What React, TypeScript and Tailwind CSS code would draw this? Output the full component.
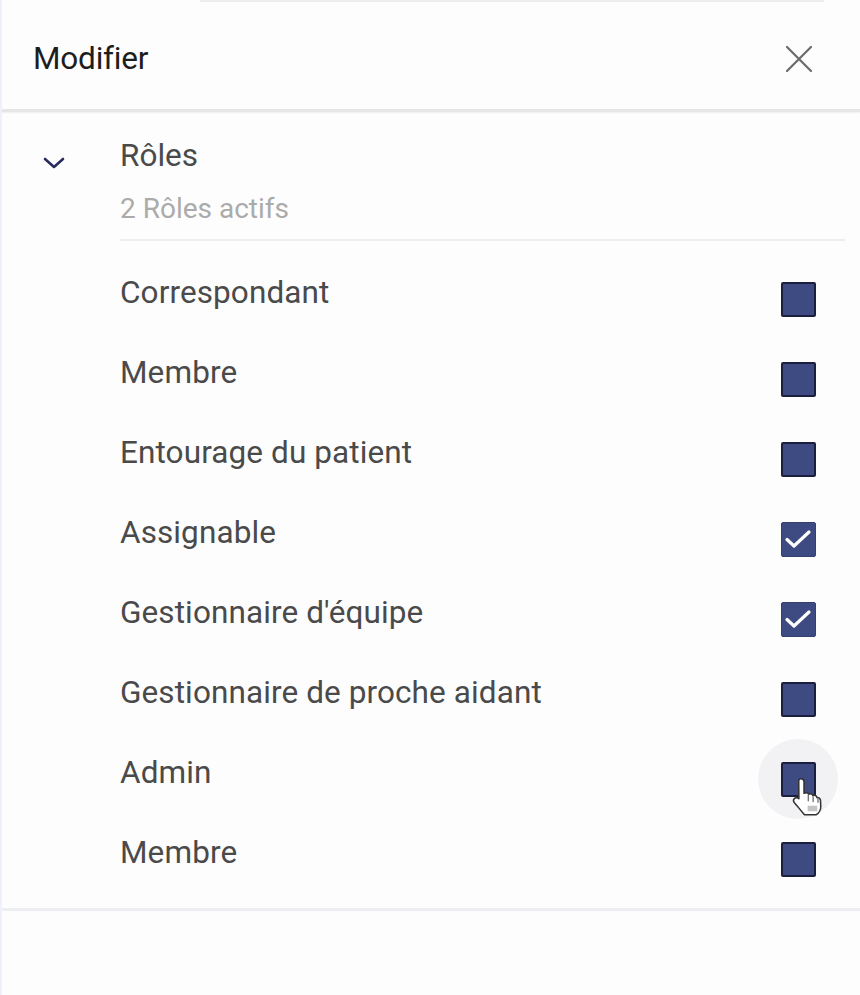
import React from "react";

const roles: { label: string; checked: boolean; hover?: boolean }[] = [
  { label: "Correspondant", checked: false },
  { label: "Membre", checked: false },
  { label: "Entourage du patient", checked: false },
  { label: "Assignable", checked: true },
  { label: "Gestionnaire d'équipe", checked: true },
  { label: "Gestionnaire de proche aidant", checked: false },
  { label: "Admin", checked: false, hover: true },
  { label: "Membre", checked: false },
];

function Checkbox({ checked, hover }: { checked: boolean; hover?: boolean }) {
  return (
    <div className="relative w-[80px] h-[80px] flex items-center justify-center">
      {hover && <div className="absolute inset-0 rounded-full bg-[#f2f2f4]" />}
      <div
        className={
          "relative w-[35px] h-[35px] rounded-[2px] bg-[#3e4a82] flex items-center justify-center " +
          (checked ? "border border-[#35406f]" : "border-[2px] border-[#1b1f3d]")
        }
      >
        {checked && (
          <svg width="30" height="22" viewBox="0 0 30 22" fill="none">
            <path d="M4 11.5 L11 18 L26 4" stroke="white" strokeWidth="3.2" strokeLinecap="round" strokeLinejoin="round" />
          </svg>
        )}
      </div>
      {hover && (
        <svg className="absolute left-[33px] top-[36px]" width="36" height="42" viewBox="0 0 26 30">
          <path
            d="M7 2.5c1.4 0 2.4 1 2.4 2.4v8.2l1-0.3c1-0.3 2 0.1 2.4 1l0.4-0.2c1-0.4 2.1 0 2.5 1l0.4-0.1c1.1-0.3 2.200.3 2.5 1.3l0.1 0.3c1.3-0.2 2.5 0.7 2.6 2l0.2 4.2c0.1 2.6-1.2 5-3.4 6.3H9.8c-1.2-1.4-3.3-3.8-4.9-5.9L2.3 19.7c-0.7-1-0.5-2.4 0.5-3.1 0.9-0.6 2.2-0.4 2.9 0.4l-0.1-12.1C5.5 3.5 5.9 2.5 7 2.5z"
            fill="white"
            stroke="#333"
            strokeWidth="1.1"
            strokeLinejoin="round"
          />
          <path d="M12.5 14.5v4M16 15.5v3.5M19.5 16.5v3" stroke="#777" strokeWidth="1" strokeLinecap="round" />
          <rect x="12" y="22" width="7" height="4" fill="#c4c4c4" />
        </svg>
      )}
    </div>
  );
}

export default function App() {
  return (
    <div
      className="w-[860px] h-[995px] bg-[#fdfdfd] relative overflow-hidden"
      style={{ fontFamily: "Roboto, 'Noto Sans', sans-serif" }}
    >
      <div className="absolute left-0 top-0 bottom-0 w-[2px] bg-[#eef1fb]" />
      <div className="ml-[200px] mr-[36px] h-[2px] bg-[#ededed]" />
      {/* Header */}
      <div className="h-[107px] flex items-center justify-between pt-[6px] pl-[33px] pr-[46px]">
        <span className="text-[31.5px] text-[#1d1d1d] tracking-[-0.2px]">Modifier</span>
        <svg width="30" height="30" viewBox="0 0 30 30" className="mt-[1px]">
          <path d="M3 3 L27 27 M27 3 L3 27" stroke="#6b6b6b" strokeWidth="2.2" strokeLinecap="round" />
        </svg>
      </div>
      <div className="h-[3px] bg-[#e6e6e6] shadow-[0_1px_2px_rgba(0,0,0,0.06)]" />

      {/* Accordion header */}
      <div className="flex pt-[24px]">
        <div className="w-[120px] flex justify-center pt-[20px] pr-[12px]">
          <svg width="24" height="14" viewBox="0 0 24 14">
            <path d="M3 3 L12 11 L21 3" stroke="#272c5c" strokeWidth="2.6" fill="none" strokeLinecap="round" strokeLinejoin="round" />
          </svg>
        </div>
        <div className="flex-1 mr-[15px]">
          <div className="text-[31.5px] leading-[40px] text-[#4a4a4a]">Rôles</div>
          <div className="text-[28px] leading-[36px] mt-[15px] text-[#ababab]">2 Rôles actifs</div>
          <div className="h-[2px] bg-[#ededed] mt-[12px]" />
        </div>
      </div>

      {/* Rows */}
      <div className="pt-[12px] pb-[15px]">
        {roles.map((r, i) => (
          <div key={i} className="h-[80px] flex items-center pl-[120px] pr-[22px]">
            <span className="flex-1 text-[31.5px] text-[#4a4a4a] tracking-[0.1px]">{r.label}</span>
            <div className="mt-[12px]">
              <Checkbox checked={r.checked} hover={r.hover} />
            </div>
          </div>
        ))}
      </div>
      <div className="h-[3px] bg-[#eceef2]" />
    </div>
  );
}
